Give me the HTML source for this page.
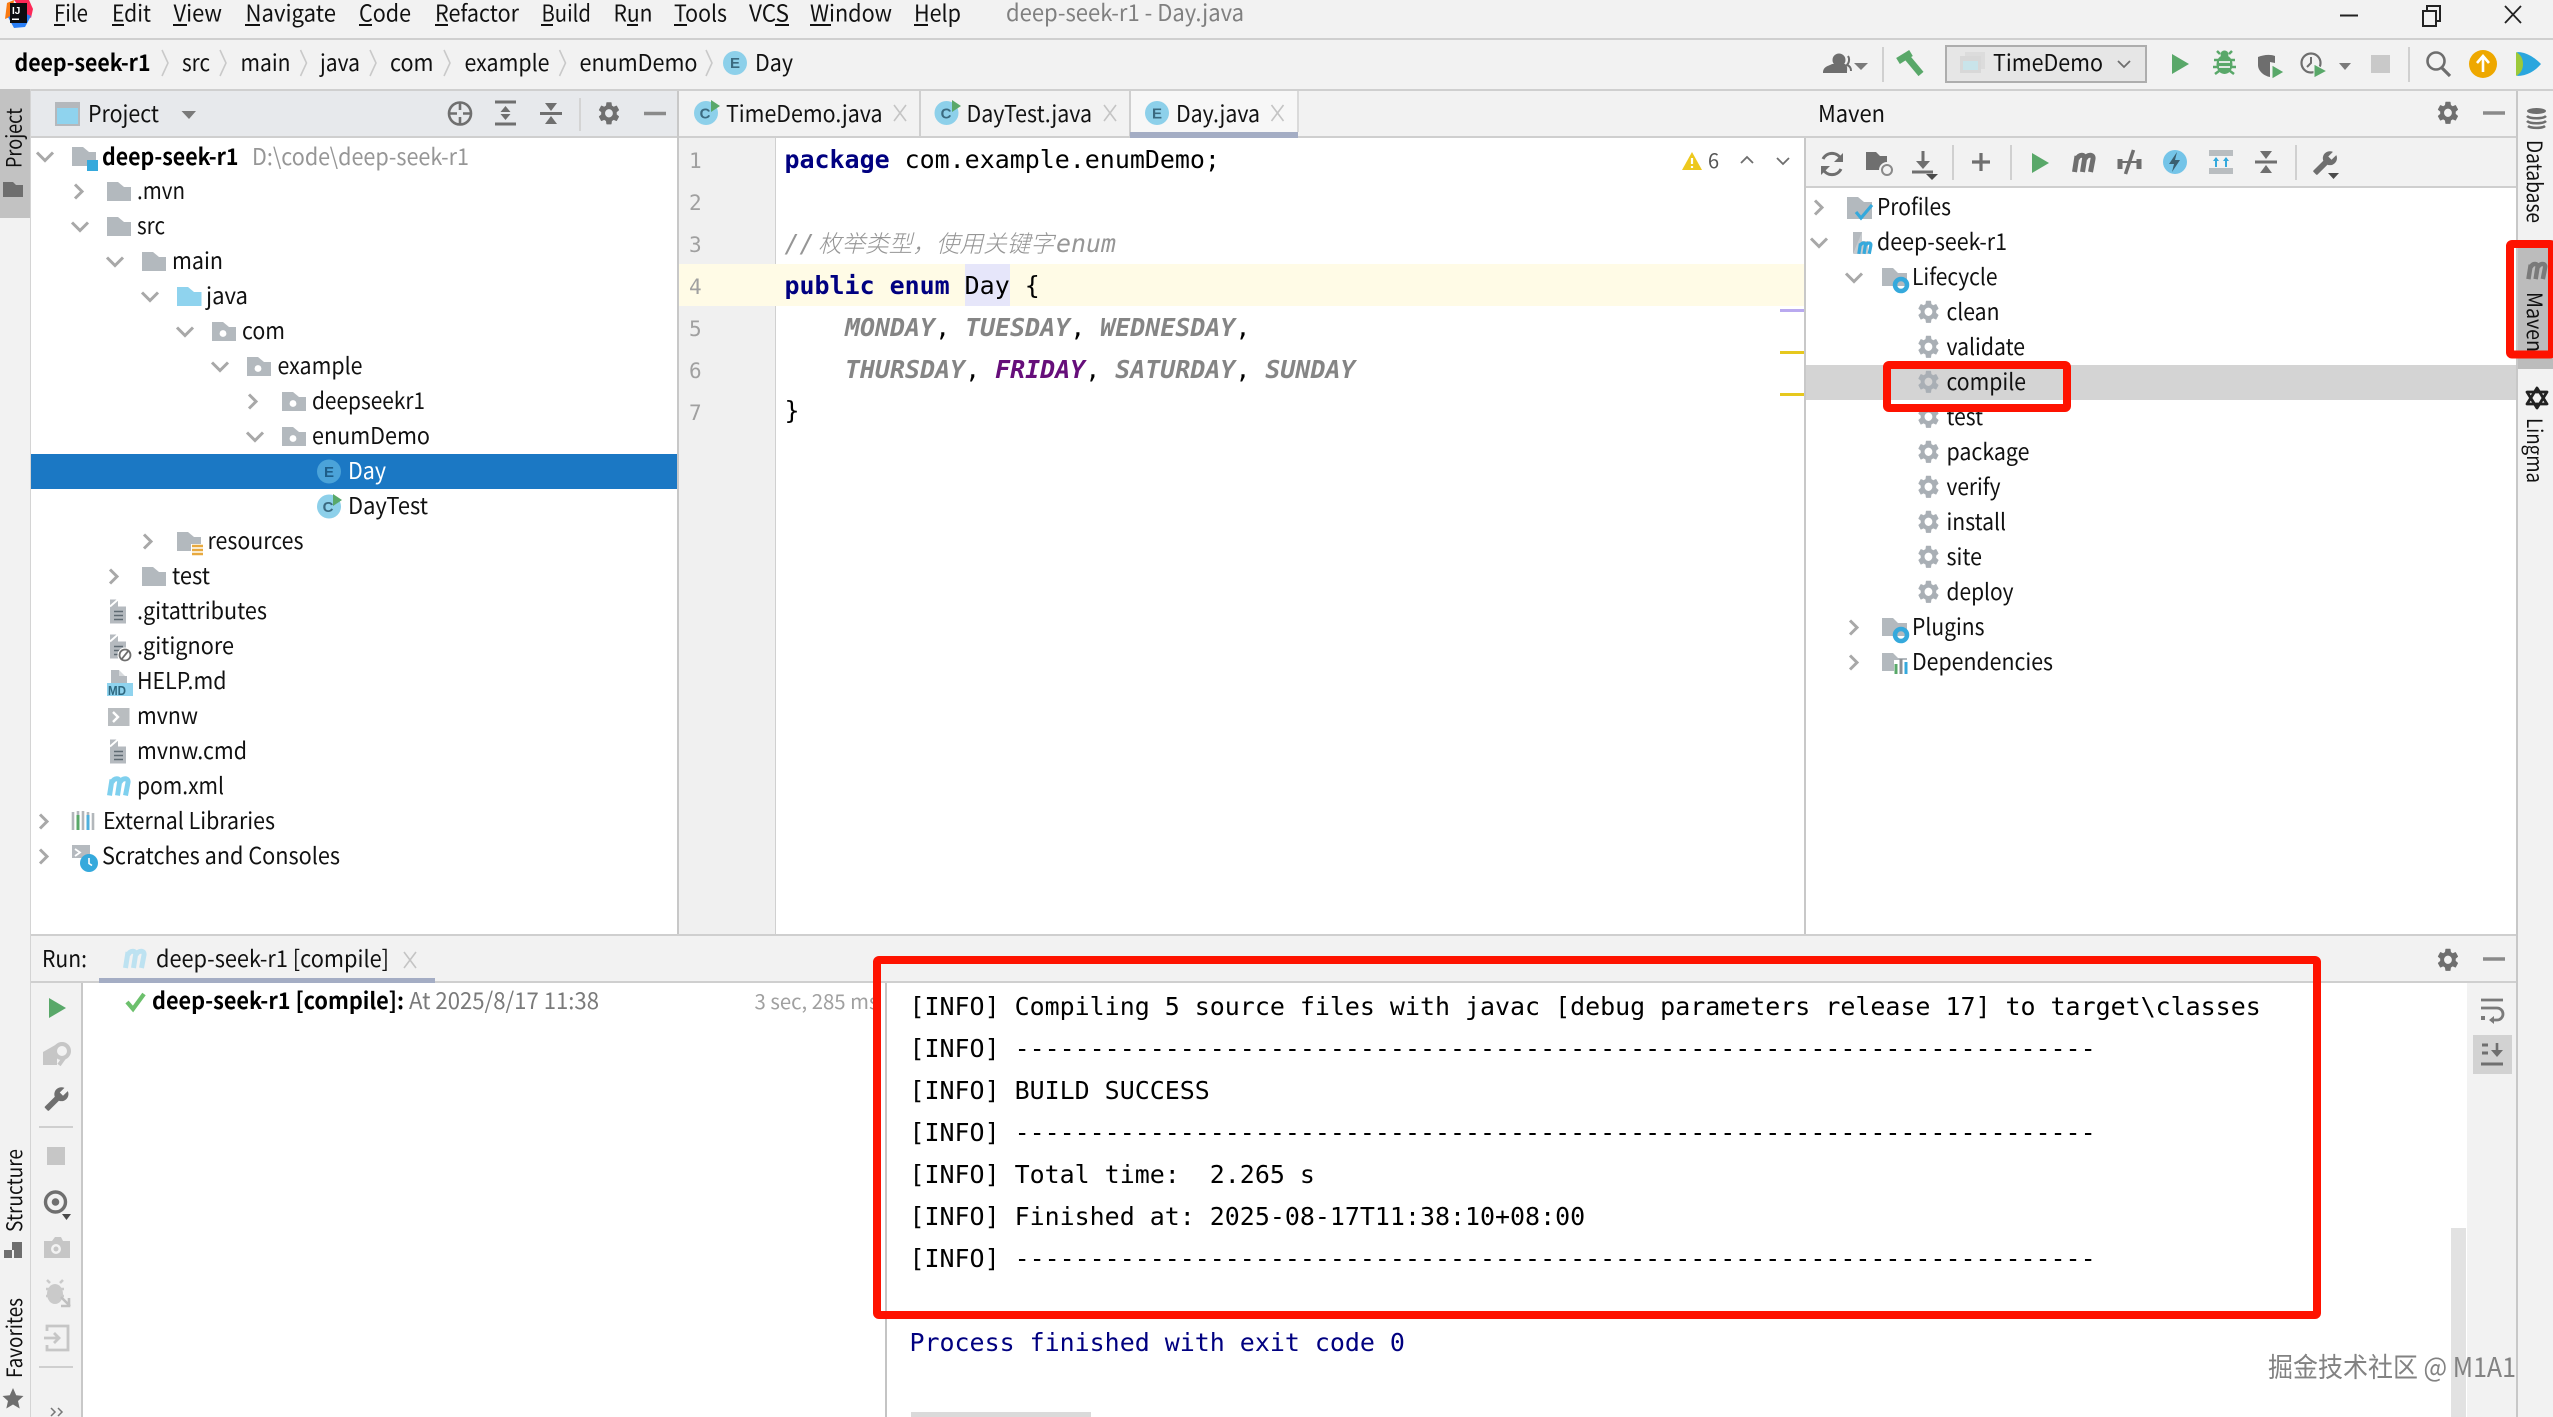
<!DOCTYPE html>
<html lang="en">
<head>
<meta charset="utf-8">
<title>deep-seek-r1 - Day.java</title>
<style>
html,body{margin:0;padding:0;background:#fff;width:2553px;height:1417px;overflow:hidden}
svg{display:block}
.u{font-family:"Noto Sans CJK SC","Liberation Sans",sans-serif;font-size:23px;fill:#111}
.b{font-weight:700;fill:#000}
.g{fill:#808080}
.m{font-family:"DejaVu Sans Mono","Liberation Mono",monospace;font-size:24.95px;fill:#000;white-space:pre}
.k{font-weight:700;fill:#000080}
.c{font-style:italic;fill:#969696}
.e{font-style:italic;font-weight:700;fill:#858585}
.n{font-family:"DejaVu Sans Mono","Liberation Mono",monospace;font-size:21px;fill:#a0a0a0}
.x{fill:none;stroke:#c8c8c8;stroke-width:2}
.ic{font-family:"Liberation Sans",sans-serif;font-size:15px;fill:#3b6a80;text-anchor:middle;font-weight:700}
</style>
</head>
<body>
<svg xmlns="http://www.w3.org/2000/svg" width="2553" height="1417" viewBox="0 0 2553 1417">
<defs>
<path id="cr" d="M-3-7 4 0-3 7" fill="none" stroke="#a8a8a8" stroke-width="3"/>
<path id="cd" d="M-8-4 0 4 8-4" fill="none" stroke="#a8a8a8" stroke-width="3"/>
<path id="bc" d="M-3-13 3 0-3 13" fill="none" stroke="#c9c9c9" stroke-width="1.6"/>
<path id="fd" d="M-12-9.5h11l6 5h7v14h-24z" fill="#b3b9be"/>
<g id="pk"><path d="M-12-9.5h11l6 5h7v14h-24z" fill="#b3b9be"/><circle cx="-1" cy="2" r="3.4" fill="#fff"/></g>
<g id="fl"><path d="M-9-12h8v7h8v17H-9z" fill="#b5babf"/><path d="M1-12 7-6H1z" fill="#fff"/><path d="M-5 0H4M-5 4H4M-5 8H4" stroke="#5f6a72" stroke-width="1.6"/><path d="M-1-12-9-5" stroke="#fff" stroke-width="2"/></g>
<path id="gr" transform="translate(-13 -14) scale(1.08 1.15)" fill-rule="evenodd" fill="#a9afb5" d="M19.14 12.94c.04-.3.06-.61.06-.94 0-.32-.02-.64-.07-.94l2.03-1.58c.18-.14.23-.41.12-.61l-1.92-3.32c-.12-.22-.37-.29-.59-.22l-2.39.96c-.5-.38-1.03-.7-1.62-.94l-.36-2.54c-.04-.24-.24-.41-.48-.41h-3.84c-.24 0-.43.17-.47.41l-.36 2.54c-.59.24-1.13.57-1.62.94l-2.39-.96c-.22-.08-.47 0-.59.22L2.74 8.87c-.12.21-.08.47.12.61l2.03 1.58c-.05.3-.09.63-.09.94s.02.64.07.94l-2.03 1.58c-.18.14-.23.41-.12.61l1.92 3.32c.12.22.37.29.59.22l2.39-.96c.5.38 1.03.7 1.62.94l.36 2.54c.05.24.24.41.48.41h3.84c.24 0 .44-.17.47-.41l.36-2.54c.59-.24 1.13-.56 1.62-.94l2.39.96c.22.08.47 0 .59-.22l1.92-3.32c.12-.22.07-.47-.12-.61l-2.01-1.58zM12 15.6c-1.98 0-3.6-1.62-3.6-3.6s1.62-3.6 3.6-3.6 3.6 1.62 3.6 3.6-1.62 3.6-3.6 3.6z"/>
<path id="gd" transform="translate(-13 -14) scale(1.08 1.15)" fill-rule="evenodd" fill="#6f6f6f" d="M19.14 12.94c.04-.3.06-.61.06-.94 0-.32-.02-.64-.07-.94l2.03-1.58c.18-.14.23-.41.12-.61l-1.92-3.32c-.12-.22-.37-.29-.59-.22l-2.39.96c-.5-.38-1.03-.7-1.62-.94l-.36-2.54c-.04-.24-.24-.41-.48-.41h-3.84c-.24 0-.43.17-.47.41l-.36 2.54c-.59.24-1.13.57-1.62.94l-2.39-.96c-.22-.08-.47 0-.59.22L2.74 8.87c-.12.21-.08.47.12.61l2.03 1.58c-.05.3-.09.63-.09.94s.02.64.07.94l-2.03 1.58c-.18.14-.23.41-.12.61l1.92 3.32c.12.22.37.29.59.22l2.39-.96c.5.38 1.03.7 1.62.94l.36 2.54c.05.24.24.41.48.41h3.84c.24 0 .44-.17.47-.41l.36-2.54c.59-.24 1.13-.56 1.62-.94l2.39.96c.22.08.47 0 .59-.22l1.92-3.32c.12-.22.07-.47-.12-.61l-2.01-1.58zM12 15.6c-1.98 0-3.6-1.62-3.6-3.6s1.62-3.6 3.6-3.6 3.6 1.62 3.6 3.6-1.62 3.6-3.6 3.6z"/>
<path id="wr" transform="translate(13 -13) scale(-1.08 1.08)" fill="#6f6f6f" d="M22.7 19l-9.1-9.1c.9-2.3.4-5-1.5-6.9-2-2-5-2.4-7.4-1.3L9 6 6 9 1.6 4.7C.4 7.1.9 10.1 2.9 12.1c1.9 1.9 4.6 2.4 6.9 1.5l9.1 9.1c.4.4 1 .4 1.4 0l2.3-2.3c.5-.4.5-1.1.1-1.4z"/>
<g id="xx"><path d="M-6-8 6 8M6-8-6 8" stroke="#c4c4c4" stroke-width="1.6" fill="none"/></g>
<g id="mi"><path d="M-11 0H11" stroke="#8a8a8a" stroke-width="3.4"/></g>
<g id="me"><path d="M-9.5 9-7-7M-1.5 9 1-7M6.500 9 9-4M-7-4C-5-9 1-9 1-4M1-4C3-9 10-9 9-4" fill="none" stroke="currentColor" stroke-width="5"/></g>
</defs>

<!-- backgrounds -->
<rect width="2553" height="1417" fill="#f2f2f2"/>
<rect y="38" width="2553" height="2" fill="#cfcfcf"/>
<rect y="89" width="2553" height="2" fill="#cfcfcf"/>

<!-- logo -->
<path d="M7 3 14 0 12 16 5 19z" fill="#f97a12"/>
<path d="M14 0H29L33 9 31 18 25 14z" fill="#fe2857"/>
<path d="M8 17 14 28 25 27 31 16 22 12z" fill="#2a7ff6"/>
<rect x="10" y="3" width="17" height="20" fill="#0c0c10"/>
<text x="12" y="14" font-family="Liberation Sans,sans-serif" font-size="10" font-weight="700" fill="#fff">IJ</text>
<rect x="12" y="18.500" width="7" height="1.500" fill="#fff"/>

<!-- menu -->
<g class="menu">
<text class="u" x="54" y="21.500" textLength="34" lengthAdjust="spacingAndGlyphs">File</text>
<text class="u" x="112" y="21.500" textLength="39" lengthAdjust="spacingAndGlyphs">Edit</text>
<text class="u" x="173.500" y="21.500" textLength="48.500" lengthAdjust="spacingAndGlyphs">View</text>
<text class="u" x="245.500" y="21.500" textLength="90.500" lengthAdjust="spacingAndGlyphs">Navigate</text>
<text class="u" x="359" y="21.500" textLength="52" lengthAdjust="spacingAndGlyphs">Code</text>
<text class="u" x="435" y="21.500" textLength="84" lengthAdjust="spacingAndGlyphs">Refactor</text>
<text class="u" x="541.500" y="21.500" textLength="49.500" lengthAdjust="spacingAndGlyphs">Build</text>
<text class="u" x="613.500" y="21.500" textLength="39" lengthAdjust="spacingAndGlyphs">Run</text>
<text class="u" x="674" y="21.500" textLength="53" lengthAdjust="spacingAndGlyphs">Tools</text>
<text class="u" x="749" y="21.500" textLength="40" lengthAdjust="spacingAndGlyphs">VCS</text>
<text class="u" x="810" y="21.500" textLength="82" lengthAdjust="spacingAndGlyphs">Window</text>
<text class="u" x="914" y="21.500" textLength="47" lengthAdjust="spacingAndGlyphs">Help</text>
<path d="M54 25h11M112 25h12M173 25h14M245 25h15M359 25h13M435 25h13M541 25h12M627 25h11M674 25h13M775 25h14M810 25h21M914 25h14" stroke="#111" stroke-width="2"/>
</g>
<text class="u g" x="1006" y="21" textLength="238" lengthAdjust="spacingAndGlyphs">deep-seek-r1 - Day.java</text>
<path d="M2340 15.500H2358" stroke="#222" stroke-width="2"/>
<path d="M2423 11h13v15h-13z" fill="none" stroke="#222" stroke-width="2"/><path d="M2427 11V6h13v15h-4" fill="none" stroke="#222" stroke-width="2"/>
<path d="M2505 6 2521 23M2521 6 2505 23" stroke="#222" stroke-width="1.800"/>

<!-- breadcrumb -->
<text class="u b" x="14.500" y="71" textLength="136" lengthAdjust="spacingAndGlyphs">deep-seek-r1</text>
<use href="#bc" x="165" y="63"/>
<text class="u" x="182" y="71" textLength="28" lengthAdjust="spacingAndGlyphs">src</text>
<use href="#bc" x="223" y="63"/>
<text class="u" x="240.500" y="71" textLength="50" lengthAdjust="spacingAndGlyphs">main</text>
<use href="#bc" x="303.500" y="63"/>
<text class="u" x="320" y="71" textLength="40" lengthAdjust="spacingAndGlyphs">java</text>
<use href="#bc" x="373" y="63"/>
<text class="u" x="390" y="71" textLength="43.500" lengthAdjust="spacingAndGlyphs">com</text>
<use href="#bc" x="447" y="63"/>
<text class="u" x="464.500" y="71" textLength="85" lengthAdjust="spacingAndGlyphs">example</text>
<use href="#bc" x="562.500" y="63"/>
<text class="u" x="579.500" y="71" textLength="118" lengthAdjust="spacingAndGlyphs">enumDemo</text>
<use href="#bc" x="709" y="63"/>
<circle cx="735" cy="63" r="12" fill="#8dd0ea"/><text class="ic" x="735" y="68">E</text>
<text class="u" x="755" y="71" textLength="38" lengthAdjust="spacingAndGlyphs">Day</text>

<!-- main toolbar -->
<circle cx="1839" cy="60" r="6.500" fill="#6e6e6e"/><path d="M1823 73c0-7 6-7 9-9h13c3 2 2 5 2 9z" fill="#6e6e6e"/><path d="M1848 56c2 3 1 7-1 9 3 1 4 3 4 6" fill="none" stroke="#6e6e6e" stroke-width="2"/>
<path d="M1854 63h14l-7 7z" fill="#7a7a7a"/>
<rect x="1882" y="47" width="2" height="35" fill="#d0d0d0"/>
<path d="M1898 61 1911 53" stroke="#59a869" stroke-width="7"/><path d="M1906 56 1921 74" stroke="#59a869" stroke-width="6.500"/>
<rect x="1946" y="46" width="200" height="36" fill="#e6e6e6" stroke="#adadad" stroke-width="2"/>
<rect x="1965" y="52" width="20" height="17" fill="#dcdcdc"/><rect x="1960" y="56" width="21" height="17" fill="#d8d8d8"/><rect x="1963" y="61" width="15" height="9" fill="#c9e4ea"/>
<text class="u" x="1993" y="71" textLength="110" lengthAdjust="spacingAndGlyphs">TimeDemo</text>
<path d="M2118 61 2124 67 2130 61" fill="none" stroke="#6e6e6e" stroke-width="1.800"/>
<path d="M2172 54 2189 64 2172 74z" fill="#59a869"/>
<ellipse cx="2224.500" cy="64.500" rx="8" ry="9.500" fill="#59a869"/><circle cx="2224.500" cy="54.500" r="4" fill="#59a869"/><path d="M2214 60h21M2213 67h23M2215 74l4-3M2234 74l-4-3M2217 51l3 3M2232 51l-3 3" stroke="#59a869" stroke-width="2.500"/><path d="M2219 62h11M2219 67h11" stroke="#f2f2f2" stroke-width="1.800"/>
<path d="M2258 57c5-2 12-3 17-1v7l-5-1v15c-6-1-12-6-12-12z" fill="#6e6e6e"/><path d="M2272 65 2284 72 2272 79z" fill="#59a869" stroke="#f2f2f2" stroke-width="1"/>
<circle cx="2311" cy="63" r="9.500" fill="none" stroke="#6e6e6e" stroke-width="2.200"/><path d="M2311 57v6l-4 4" fill="none" stroke="#6e6e6e" stroke-width="2"/><path d="M2314 64 2327 71 2314 78z" fill="#59a869" stroke="#f2f2f2" stroke-width="1"/>
<path d="M2339 63h12l-6 7z" fill="#7a7a7a"/>
<rect x="2371" y="55" width="19" height="18" fill="#c9c9c9"/>
<rect x="2408" y="47" width="2" height="35" fill="#d0d0d0"/>
<g transform="translate(3 0)">
<circle cx="2433" cy="61" r="8.500" fill="none" stroke="#6e6e6e" stroke-width="2.600"/><path d="M2439 68 2447 76" stroke="#6e6e6e" stroke-width="3.200"/>
<ellipse cx="2480" cy="64" rx="14" ry="14" fill="#eea800"/><path d="M2480 72V57M2474 63 2480 56 2486 63" fill="none" stroke="#fff" stroke-width="2.600"/>
<path d="M2514 52c10 0 18 6 24 12-6 7-14 12-24 12 4-8 4-16 0-24z" fill="#2aa6de"/><path d="M2513 52c4 2 7 6 7 12s-3 10-7 12z" fill="#9cc93a"/>
</g>

<!-- left stripe -->
<rect x="0" y="89" width="30" height="129" fill="#c2c2c2"/>
<rect x="30" y="89" width="1" height="1328" fill="#d4d4d4"/>
<text class="u" transform="translate(21.500 168) rotate(-90)" textLength="60" lengthAdjust="spacingAndGlyphs" style="font-size:21px">Project</text>
<path d="M3 182h10l3 3h7v12H3z" fill="#6e6e6e"/>
<text class="u" transform="translate(22 1232) rotate(-90)" textLength="83" lengthAdjust="spacingAndGlyphs" style="font-size:21px">Structure</text>
<path d="M12 1242h10v8H12zM4 1250h8v8H4zM14 1250h8v8h-8z" fill="#6e6e6e"/>
<text class="u" transform="translate(22 1378) rotate(-90)" textLength="80" lengthAdjust="spacingAndGlyphs" style="font-size:21px">Favorites</text>
<path d="M13 1388l3.200 7.300 7.300.7-5.500 5 1.700 7.500-6.700-4-6.700 4 1.700-7.500-5.500-5 7.300-.7z" fill="#6e6e6e"/>

<!-- project header -->
<rect x="31" y="91" width="646" height="45" fill="#e7e9ec"/>
<rect x="31" y="136" width="2486" height="2" fill="#cfcfcf"/>
<rect x="56" y="103" width="23" height="22" fill="#8fd3ee" stroke="#b4b8bc" stroke-width="2"/><rect x="56" y="103" width="23" height="5" fill="#b4b8bc"/>
<text class="u" x="88" y="122" textLength="71" lengthAdjust="spacingAndGlyphs">Project</text>
<path d="M181.500 111H196L189 119z" fill="#7a7a7a"/>
<circle cx="460" cy="113.500" r="11" fill="none" stroke="#6f6f6f" stroke-width="2.600"/><path d="M460 102v8M460 117v8M449 113.500h8M463 113.500h8" stroke="#6f6f6f" stroke-width="2.600"/>
<path d="M495 102h21M495 124h21" stroke="#6f6f6f" stroke-width="3"/><path d="M505.500 106l5 6h-10zM505.500 120l5-6h-10z" fill="#6f6f6f"/>
<path d="M540 113.500h22" stroke="#6f6f6f" stroke-width="3"/><path d="M551 111l-6-8h12zM551 116l-6 8h12z" fill="#6f6f6f"/>
<rect x="579" y="98" width="2" height="33" fill="#d4d4d4"/>
<use href="#gd" x="609" y="113.500"/>
<use href="#mi" x="655" y="113.500"/>

<!-- project tree -->
<rect x="31" y="138" width="646" height="796" fill="#fff"/>
<rect x="31" y="454" width="646" height="35" fill="#1b78c4"/>
<rect x="677" y="91" width="2" height="843" fill="#c8c8c8"/>

<use href="#cd" x="45" y="156.500"/><use href="#fd" x="84" y="156.500"/><rect x="87" y="160" width="11" height="11" fill="#35a9dc"/>
<text class="u b" x="102" y="165" textLength="136.500" lengthAdjust="spacingAndGlyphs">deep-seek-r1</text>
<text class="u" x="252" y="165" textLength="217" lengthAdjust="spacingAndGlyphs" style="fill:#969696">D:\code\deep-seek-r1</text>

<use href="#cr" x="78" y="191.500"/><use href="#fd" x="119" y="191.500"/>
<text class="u" x="137" y="199" textLength="48" lengthAdjust="spacingAndGlyphs">.mvn</text>
<use href="#cd" x="80" y="226.500"/><use href="#fd" x="119" y="226.500"/>
<text class="u" x="137" y="234" textLength="28" lengthAdjust="spacingAndGlyphs">src</text>
<use href="#cd" x="115" y="261.500"/><use href="#fd" x="154" y="261.500"/>
<text class="u" x="172" y="269" textLength="51" lengthAdjust="spacingAndGlyphs">main</text>
<use href="#cd" x="150" y="296.500"/><path d="M177 287h11l6 5h7.500v14H177z" fill="#8fd3ee"/>
<text class="u" x="206" y="304" textLength="42" lengthAdjust="spacingAndGlyphs">java</text>
<use href="#cd" x="185" y="331.500"/><use href="#pk" x="224" y="331.500"/>
<text class="u" x="242" y="339" textLength="43" lengthAdjust="spacingAndGlyphs">com</text>
<use href="#cd" x="220" y="366.500"/><use href="#pk" x="259" y="366.500"/>
<text class="u" x="277.500" y="374" textLength="85" lengthAdjust="spacingAndGlyphs">example</text>
<use href="#cr" x="252" y="401.500"/><use href="#pk" x="294" y="401.500"/>
<text class="u" x="312" y="409" textLength="113" lengthAdjust="spacingAndGlyphs">deepseekr1</text>
<use href="#cd" x="255" y="436.500"/><use href="#pk" x="294" y="436.500"/>
<text class="u" x="312" y="444" textLength="118" lengthAdjust="spacingAndGlyphs">enumDemo</text>
<circle cx="329" cy="471.500" r="12" fill="#4ba3d9"/><text class="ic" x="329" y="477" style="fill:#1d5d88">E</text>
<text class="u" x="348" y="479" textLength="38" lengthAdjust="spacingAndGlyphs" style="fill:#fff">Day</text>
<circle cx="329" cy="506.500" r="12" fill="#8dd0ea"/><text class="ic" x="328" y="512">C</text><path d="M333 494l9 6-9 6z" fill="#59a869"/>
<text class="u" x="348" y="514" textLength="80" lengthAdjust="spacingAndGlyphs">DayTest</text>
<use href="#cr" x="147" y="541.500"/><use href="#fd" x="189" y="541.500"/><rect x="191" y="544" width="12" height="13" fill="#fff"/><path d="M192 546h11M192 550h11M192 554h11" stroke="#e8a93f" stroke-width="2.600"/>
<text class="u" x="207.500" y="549" textLength="96" lengthAdjust="spacingAndGlyphs">resources</text>
<use href="#cr" x="113" y="576.500"/><use href="#fd" x="154" y="576.500"/>
<text class="u" x="172" y="584" textLength="38" lengthAdjust="spacingAndGlyphs">test</text>
<use href="#fl" x="119" y="611.500"/>
<text class="u" x="137" y="619" textLength="130" lengthAdjust="spacingAndGlyphs">.gitattributes</text>
<use href="#fl" x="119" y="646.500"/><circle cx="125" cy="655" r="7.500" fill="#fff"/><circle cx="125" cy="655" r="5.500" fill="none" stroke="#6e6e6e" stroke-width="1.800"/><path d="M121 660l8-10" stroke="#6e6e6e" stroke-width="1.800"/>
<text class="u" x="137" y="654" textLength="97" lengthAdjust="spacingAndGlyphs">.gitignore</text>
<path d="M111 670h8v6h8v8h-16z" fill="#b5babf"/><path d="M119 670l6 6h-6z" fill="#d6d9dc"/><rect x="107" y="683" width="26" height="13" fill="#8fd3ee"/><text x="108" y="695" font-family="Liberation Sans,sans-serif" font-size="12.500" font-weight="700" fill="#2e6880" textLength="18" lengthAdjust="spacingAndGlyphs">MD</text>
<text class="u" x="137" y="689" textLength="89.500" lengthAdjust="spacingAndGlyphs">HELP.md</text>
<rect x="108" y="708" width="21.500" height="18" fill="#b9bdc0"/><path d="M113 712l5 5-5 5" fill="none" stroke="#fff" stroke-width="2.400"/>
<text class="u" x="137" y="724" textLength="61" lengthAdjust="spacingAndGlyphs">mvnw</text>
<use href="#fl" x="119" y="751.500"/>
<text class="u" x="137" y="759" textLength="110" lengthAdjust="spacingAndGlyphs">mvnw.cmd</text>
<use href="#me" x="119" y="786.500" style="color:#7fd0ee"/>
<text class="u" x="137" y="794" textLength="87" lengthAdjust="spacingAndGlyphs">pom.xml</text>
<use href="#cr" x="43" y="821.500"/>
<path d="M73 812v18M78 811v19M83 811v19M88 812v18M93 813v17" stroke-width="2.600" fill="none" stroke="#b2b7bb"/><path d="M78 815v15" stroke="#59a869" stroke-width="3"/><path d="M88 815v15" stroke="#4fb0dd" stroke-width="3"/>
<text class="u" x="103" y="829" textLength="172" lengthAdjust="spacingAndGlyphs">External Libraries</text>
<use href="#cr" x="43" y="856.500"/>
<path d="M72 845h18v13h-18z" fill="#b5babf"/><path d="M75 849l5 3.500-5 3.500" fill="none" stroke="#fff" stroke-width="1.800"/><circle cx="89" cy="863" r="9" fill="#35a9dc"/><path d="M89 858v5.500l3 2" fill="none" stroke="#fff" stroke-width="1.600"/>
<text class="u" x="102" y="864" textLength="238" lengthAdjust="spacingAndGlyphs">Scratches and Consoles</text>

<!-- tabs -->
<rect x="919" y="91" width="2" height="45" fill="#cfcfcf"/>
<rect x="1129" y="91" width="2" height="45" fill="#cfcfcf"/>
<rect x="1131" y="91" width="167" height="41" fill="#f7f7f7"/>
<rect x="1297" y="91" width="2" height="41" fill="#dadada"/>
<rect x="1130" y="132" width="168" height="6" fill="#a4adc4"/>
<circle cx="706" cy="113" r="12" fill="#8dd0ea"/><text class="ic" x="705" y="118.500">C</text><path d="M711 100l9 6-9 6z" fill="#59a869"/>
<text class="u" x="726" y="122" textLength="156.500" lengthAdjust="spacingAndGlyphs">TimeDemo.java</text>
<use href="#xx" x="900" y="113"/>
<circle cx="946.500" cy="113" r="12" fill="#8dd0ea"/><text class="ic" x="946" y="118.500">C</text><path d="M952 100l9 6-9 6z" fill="#59a869"/>
<text class="u" x="966.500" y="122" textLength="125.500" lengthAdjust="spacingAndGlyphs">DayTest.java</text>
<use href="#xx" x="1110" y="113"/>
<circle cx="1157" cy="113" r="12" fill="#8dd0ea"/><text class="ic" x="1157" y="118.500">E</text>
<text class="u" x="1176" y="122" textLength="84" lengthAdjust="spacingAndGlyphs">Day.java</text>
<use href="#xx" x="1277.500" y="113"/>

<!-- editor -->
<rect x="679" y="138" width="96" height="796" fill="#f0f0f0"/>
<rect x="775" y="138" width="1" height="796" fill="#d0d0d0"/>
<rect x="776" y="138" width="1029" height="796" fill="#fff"/>
<rect x="679" y="264" width="1125" height="42" fill="#fffbe6"/>
<rect x="965" y="264" width="45" height="42" fill="#e6e6fa"/>
<rect x="1804" y="138" width="2" height="796" fill="#c8c8c8"/>
<text class="n" x="689" y="168">1</text><text class="n" x="689" y="210">2</text><text class="n" x="689" y="252">3</text><text class="n" x="689" y="294">4</text><text class="n" x="689" y="336">5</text><text class="n" x="689" y="378">6</text><text class="n" x="689" y="420">7</text>

<text class="m" x="784.500" y="168"><tspan class="k">package</tspan> com.example.enumDemo;</text>
<text class="m c" x="784.500" y="252">//</text>
<text x="818" y="252" class="c" style="font-family:'Noto Sans CJK SC',sans-serif;font-size:23.6px;font-weight:300">枚举类型，使用关键字</text>
<text class="m c" x="1056" y="252">enum</text>
<text class="m" x="784.500" y="294"><tspan class="k">public enum</tspan> Day {</text>
<text class="m" x="845" y="336"><tspan class="e">MONDAY</tspan>, <tspan class="e">TUESDAY</tspan>, <tspan class="e">WEDNESDAY</tspan>,</text>
<text class="m" x="845" y="378"><tspan class="e">THURSDAY</tspan>, <tspan class="e" style="fill:#660e7a">FRIDAY</tspan>, <tspan class="e">SATURDAY</tspan>, <tspan class="e">SUNDAY</tspan></text>
<text class="m" x="784.500" y="419">}</text>

<path d="M1692 152 1702 170H1682z" fill="#edc81d"/><path d="M1692 158v6M1692 166v2" stroke="#fff" stroke-width="2.200"/>
<text class="u" x="1708" y="168" style="font-size:20px;fill:#555">6</text>
<path d="M1741 163 1747 157 1753 163" fill="none" stroke="#6e6e6e" stroke-width="1.800"/>
<path d="M1777 158 1783 164 1789 158" fill="none" stroke="#6e6e6e" stroke-width="1.800"/>
<rect x="1780" y="309" width="24" height="3" fill="#b9a9ef"/>
<rect x="1780" y="351" width="24" height="3" fill="#e6c81e"/>
<rect x="1780" y="393" width="24" height="3" fill="#e6c81e"/>

<!-- maven -->
<text class="u" x="1818" y="122" textLength="67" lengthAdjust="spacingAndGlyphs">Maven</text>
<use href="#gd" x="2448" y="113"/>
<use href="#mi" x="2494" y="113"/>
<rect x="1806" y="186" width="710" height="2" fill="#cfcfcf"/>
<rect x="1806" y="188" width="710" height="746" fill="#fff"/>
<rect x="1806" y="365" width="710" height="35" fill="#d4d4d4"/>
<rect x="2516" y="91" width="2" height="1326" fill="#c8c8c8"/>
<!-- maven toolbar -->
<path d="M1823 159a10 10 0 0 1 18 0M1841 169a10 10 0 0 1-18 0" fill="none" stroke="#6f6f6f" stroke-width="3"/><path d="M1843 153v9h-9zM1821 175v-9h9z" fill="#6f6f6f"/>
<path d="M1866 152h10l4 4h7v14h-21z" fill="#6f6f6f"/><circle cx="1887" cy="170" r="8" fill="#f2f2f2"/><circle cx="1887" cy="170" r="5" fill="none" stroke="#8a8a8a" stroke-width="2"/>
<path d="M1923 151v15" stroke="#6f6f6f" stroke-width="3"/><path d="M1916 161 1923 169 1930 161z" fill="#6f6f6f"/><path d="M1912 172h21" stroke="#6f6f6f" stroke-width="3"/><path d="M1926 174h12l-6 6z" fill="#4b4b4b"/>
<rect x="1952" y="145" width="2" height="35" fill="#d0d0d0"/>
<path d="M1981 153v18M1972 162h18" stroke="#6f6f6f" stroke-width="3.200"/>
<rect x="2010" y="145" width="2" height="35" fill="#d0d0d0"/>
<path d="M2032 153 2049 163 2032 173z" fill="#59a869"/>
<g transform="translate(2084 163)" style="color:#6f6f6f"><use href="#me"/></g>
<g transform="translate(1.500 0)"><path d="M2116 165v-6h5v10h-5zM2135 165v-6h5v10h-5z" fill="#6f6f6f"/><path d="M2132 150 2124 174" stroke="#6f6f6f" stroke-width="3.500"/><path d="M2116 162h24" stroke="#6f6f6f" stroke-width="2"/></g>
<circle cx="2175" cy="162" r="12" fill="#74c4e8"/><path d="M2177 152 2169 164h5l-2 8 8-12h-5z" fill="#3a5f70"/>
<g transform="translate(2 0)"><rect x="2207" y="150" width="24" height="6" fill="#b9bdc0"/><rect x="2207" y="168" width="24" height="6" fill="#b9bdc0"/><path d="M2214 158v9M2224 158v9" stroke="#35a9dc" stroke-width="2"/><path d="M2214 157l-3 4h6zM2224 157l-3 4h6z" fill="#35a9dc"/></g>
<g transform="translate(2 0)"><path d="M2253 162h22" stroke="#6f6f6f" stroke-width="3"/><path d="M2264 159l-6-8h12zM2264 165l-6 8h12z" fill="#6f6f6f"/></g>
<rect x="2295" y="145" width="2" height="35" fill="#d0d0d0"/>
<use href="#wr" x="2325" y="163"/><path d="M2328 173h11l-5.500 6z" fill="#4b4b4b"/>

<!-- maven tree -->
<use href="#cr" x="1818" y="207.500"/>
<path d="M1847 197h11l6 5h8v17h-25z" fill="#b3b9be"/><path d="M1856 212l5 6 11-13" fill="none" stroke="#35a9dc" stroke-width="3.200"/>
<text class="u" x="1877" y="215" textLength="74" lengthAdjust="spacingAndGlyphs">Profiles</text>
<use href="#cd" x="1819" y="242.500"/>
<path d="M1853 232h9v21h-9z" fill="#b5babf"/><path d="M1862 232v9h6v13h-15" fill="#c7cbcf"/><g transform="translate(1865 248) scale(.65)" style="color:#35a9dc"><use href="#me"/></g>
<text class="u" x="1877" y="250" textLength="130" lengthAdjust="spacingAndGlyphs">deep-seek-r1</text>
<use href="#cd" x="1854" y="277.500"/>
<path d="M1882 268h11l5 5h9v13h-25z" fill="#b3b9be"/><circle cx="1901" cy="285" r="6" fill="none" stroke="#35a9dc" stroke-width="4.500"/>
<text class="u" x="1912" y="285" textLength="85.500" lengthAdjust="spacingAndGlyphs">Lifecycle</text>
<use href="#gr" x="1928.500" y="312"/>
<text class="u" x="1946.500" y="320" textLength="53" lengthAdjust="spacingAndGlyphs">clean</text>
<use href="#gr" x="1928.500" y="347"/>
<text class="u" x="1946.500" y="355" textLength="78.500" lengthAdjust="spacingAndGlyphs">validate</text>
<use href="#gr" x="1928.500" y="382"/>
<text class="u" x="1946.500" y="390" textLength="79.500" lengthAdjust="spacingAndGlyphs">compile</text>
<use href="#gr" x="1928.500" y="417"/>
<text class="u" x="1946.500" y="425" textLength="36.500" lengthAdjust="spacingAndGlyphs">test</text>
<use href="#gr" x="1928.500" y="452"/>
<text class="u" x="1946.500" y="460" textLength="83" lengthAdjust="spacingAndGlyphs">package</text>
<use href="#gr" x="1928.500" y="487"/>
<text class="u" x="1946.500" y="495" textLength="54" lengthAdjust="spacingAndGlyphs">verify</text>
<use href="#gr" x="1928.500" y="522"/>
<text class="u" x="1946.500" y="530" textLength="59.500" lengthAdjust="spacingAndGlyphs">install</text>
<use href="#gr" x="1928.500" y="557"/>
<text class="u" x="1946.500" y="565" textLength="35.500" lengthAdjust="spacingAndGlyphs">site</text>
<use href="#gr" x="1928.500" y="592"/>
<text class="u" x="1946.500" y="600" textLength="67" lengthAdjust="spacingAndGlyphs">deploy</text>
<use href="#cr" x="1853" y="627.500"/>
<path d="M1882 618h11l5 5h9v13h-25z" fill="#b3b9be"/><circle cx="1901" cy="635" r="6" fill="none" stroke="#35a9dc" stroke-width="4.500"/>
<text class="u" x="1912" y="635" textLength="72.500" lengthAdjust="spacingAndGlyphs">Plugins</text>
<use href="#cr" x="1853" y="662.500"/>
<path d="M1882 653h11l5 5h9v13h-25z" fill="#b3b9be"/><rect x="1894" y="660" width="14" height="15" fill="#fff"/><path d="M1896 674v-10" stroke="#59a869" stroke-width="3"/><path d="M1901 674v-15" stroke="#8a8f94" stroke-width="3"/><path d="M1906 674v-12" stroke="#35a9dc" stroke-width="3"/>
<text class="u" x="1912" y="670" textLength="141" lengthAdjust="spacingAndGlyphs">Dependencies</text>

<!-- right stripe -->
<ellipse cx="2536.500" cy="111" rx="9.500" ry="3" fill="#6e6e6e"/><path d="M2527 116c3 3 16 3 19 0M2527 121c3 3 16 3 19 0M2528 126c3 2.500 14 2.500 17 0" fill="none" stroke="#6e6e6e" stroke-width="2.600"/>
<text class="u" transform="translate(2527 140) rotate(90)" textLength="83" lengthAdjust="spacingAndGlyphs" style="font-size:21px">Database</text>
<rect x="2518" y="240" width="35" height="129" fill="#bcbcbc"/>
<g transform="translate(2537 271) scale(.9)" style="color:#7a7a7a"><use href="#me"/></g>
<text class="u" transform="translate(2527 292) rotate(90)" textLength="60" lengthAdjust="spacingAndGlyphs" style="font-size:21px">Maven</text>
<path d="M2537 388 2547 404H2527zM2537 408 2527 392H2547z" fill="none" stroke="#222" stroke-width="2.800" stroke-linejoin="round"/>
<text class="u" transform="translate(2527 418) rotate(90)" textLength="65" lengthAdjust="spacingAndGlyphs" style="font-size:21px">Lingma</text>

<!-- run panel -->
<rect x="31" y="934" width="2485" height="2" fill="#cfcfcf"/>
<rect x="31" y="981" width="2485" height="2" fill="#cfcfcf"/>
<rect x="99" y="978" width="336" height="5" fill="#a4adc4"/>
<text class="u" x="42" y="967" textLength="45" lengthAdjust="spacingAndGlyphs">Run:</text>
<g transform="translate(135 959)" style="color:#bde2f1"><use href="#me"/></g>
<text class="u" x="156" y="967" textLength="233" lengthAdjust="spacingAndGlyphs">deep-seek-r1 [compile]</text>
<use href="#xx" x="410" y="960"/>
<use href="#gd" x="2448" y="960"/>
<use href="#mi" x="2494" y="959"/>

<rect x="81" y="983" width="2" height="434" fill="#c8c8c8"/>
<rect x="83" y="983" width="2384" height="434" fill="#fff"/>
<rect x="885" y="983" width="2" height="434" fill="#c4c4c4"/>

<!-- run left toolbar -->
<path d="M49 998 66 1008 49 1018z" fill="#59a869"/>
<path d="M43 1052 57 1044V1065H43z" fill="#c6c6c6"/><circle cx="62" cy="1051" r="7" fill="none" stroke="#c6c6c6" stroke-width="4"/><path d="M64 1058l-5 7" stroke="#c6c6c6" stroke-width="4"/>
<use href="#wr" x="56.500" y="1099"/>
<rect x="39" y="1126" width="34" height="2" fill="#cfcfcf"/>
<rect x="47" y="1147" width="18" height="18" fill="#c6c6c6"/>
<circle cx="55.500" cy="1202" r="10" fill="none" stroke="#6f6f6f" stroke-width="3.400"/><circle cx="55.500" cy="1202" r="3.800" fill="#6f6f6f"/><path d="M62 1214h9l-4.500 6z" fill="#4b4b4b"/>
<path d="M44 1241h8l3-4h6l2 4h7v17H44z" fill="#c6c6c6"/><circle cx="56" cy="1249" r="5" fill="#f2f2f2"/><circle cx="56" cy="1249" r="2.500" fill="#c6c6c6"/>
<ellipse cx="55" cy="1294" rx="8" ry="10" fill="#cacaca"/><path d="M46 1289h18M46 1296h18M50 1283l-3-3M60 1283l3-3" stroke="#cacaca" stroke-width="2.500"/><path d="M61 1297l9 9M69 1298v8h-8" fill="none" stroke="#c0c0c0" stroke-width="2.600"/>
<path d="M47 1331v-5h21v24H47v-5" fill="none" stroke="#c6c6c6" stroke-width="2.800"/><path d="M44 1338h14M54 1333l5 5-5 5" fill="none" stroke="#c6c6c6" stroke-width="2.800"/>
<rect x="39" y="1366" width="34" height="2" fill="#cfcfcf"/>
<path d="M51 1408l4 4-4 4M58 1408l4 4-4 4" fill="none" stroke="#777" stroke-width="1.500"/>

<!-- run tree -->
<path d="M127 1002l6 7 11-15" fill="none" stroke="#6cc06c" stroke-width="4.200"/>
<text class="u b" x="152" y="1009" textLength="252" lengthAdjust="spacingAndGlyphs">deep-seek-r1 [compile]:</text>
<text class="u" x="409" y="1009" textLength="190" lengthAdjust="spacingAndGlyphs" style="fill:#7a7a7a">At 2025/8/17 11:38</text>
<text class="u" x="754.500" y="1009" textLength="124" lengthAdjust="spacingAndGlyphs" style="font-size:20px;fill:#a0a0a0">3 sec, 285 ms</text>

<!-- console -->
<text class="m" x="909.500" y="1015">[INFO] Compiling 5 source files with javac [debug parameters release 17] to target\classes</text>
<text class="m" x="909.500" y="1057">[INFO] ------------------------------------------------------------------------</text>
<text class="m" x="909.500" y="1099">[INFO] BUILD SUCCESS</text>
<text class="m" x="909.500" y="1141">[INFO] ------------------------------------------------------------------------</text>
<text class="m" x="909.500" y="1183">[INFO] Total time:  2.265 s</text>
<text class="m" x="909.500" y="1225">[INFO] Finished at: 2025-08-17T11:38:10+08:00</text>
<text class="m" x="909.500" y="1267">[INFO] ------------------------------------------------------------------------</text>
<text class="m" x="909.500" y="1351" style="fill:#000080">Process finished with exit code 0</text>
<rect x="911" y="1412" width="180" height="5" fill="#dadada"/>

<!-- console right -->
<rect x="2467" y="983" width="49" height="434" fill="#f2f2f2"/>
<rect x="2451" y="1228" width="15" height="189" fill="#e2e2e2"/>
<g transform="translate(3 0)">
<path d="M2478 1000h22M2478 1008h16a6 6 0 0 1 0 12h-5" fill="none" stroke="#7a7a7a" stroke-width="2.800"/><path d="M2491 1016v8l-5-4z" fill="#7a7a7a"/><rect x="2478" y="1016" width="4" height="4" fill="#7a7a7a"/>
<rect x="2470" y="1035" width="39" height="39" fill="#d2d2d2"/>
<path d="M2479 1045h6M2479 1053h6" stroke="#6f6f6f" stroke-width="3"/><path d="M2494 1043v10" stroke="#6f6f6f" stroke-width="2.600"/><path d="M2488 1050h12l-6 7z" fill="#6f6f6f"/>
<path d="M2478 1064h22" stroke="#6f6f6f" stroke-width="3"/>
</g>

<!-- watermark -->
<text x="2268" y="1377" textLength="248" lengthAdjust="spacingAndGlyphs" font-family="Noto Sans CJK SC,sans-serif" font-size="27" fill="#828282">掘金技术社区 @ M1A1</text>

<!-- red annotations -->
<rect x="1887" y="365" width="180" height="43" rx="2" fill="none" stroke="#fe1200" stroke-width="8"/>
<rect x="2510" y="244" width="42" height="110.500" rx="2" fill="none" stroke="#fe1200" stroke-width="8"/>
<rect x="877" y="960" width="1440" height="355" rx="2" fill="none" stroke="#fe1200" stroke-width="8"/>
</svg>
</body>
</html>
